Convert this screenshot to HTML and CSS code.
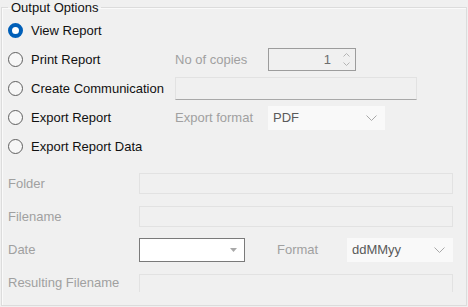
FILE: index.html
```html
<!DOCTYPE html>
<html lang="en">
  <head>
    <meta charset="utf-8">
    <title>Output Options</title>
    <link rel="stylesheet" href="styles.css">
  </head>
  <body>
    <fieldset class="options">
      <legend>Output Options</legend>

      <div class="choices">
        <div class="choice_row">
          <label class="radio checked"><span class="dot"></span>View Report</label>
        </div>
        <div class="choice_row">
          <label class="radio"><span class="dot"></span>Print Report</label>
          <span class="muted">No of copies</span>
          <div class="spin">
            <span class="spin_value">1</span>
            <span class="spin_arrows">
              <svg width="7" height="4" viewBox="0 0 7 4"><path d="M0.5 3.5 L3.5 0.5 L6.5 3.5" fill="none" stroke="#b4b4b4"/></svg>
              <svg width="7" height="4" viewBox="0 0 7 4"><path d="M0.5 0.5 L3.5 3.5 L6.5 0.5" fill="none" stroke="#b4b4b4"/></svg>
            </span>
          </div>
        </div>
        <div class="choice_row">
          <label class="radio"><span class="dot"></span>Create Communication</label>
          <div class="textbox wide"></div>
        </div>
        <div class="choice_row">
          <label class="radio"><span class="dot"></span>Export Report</label>
          <span class="muted">Export format</span>
          <div class="combo export_combo">
            <span>PDF</span>
            <svg width="11" height="6" viewBox="0 0 11 6"><path d="M0.5 0.5 L5.5 5.5 L10.5 0.5" fill="none" stroke="#a8a8a8"/></svg>
          </div>
        </div>
        <div class="choice_row">
          <label class="radio"><span class="dot"></span>Export Report Data</label>
        </div>
      </div>

      <div class="fields">
        <div class="field_row">
          <span class="muted">Folder</span>
          <div class="textbox"></div>
        </div>
        <div class="field_row">
          <span class="muted">Filename</span>
          <div class="textbox"></div>
        </div>
        <div class="field_row">
          <span class="muted">Date</span>
          <div class="date_line">
            <div class="date_combo">
              <svg width="7" height="4" viewBox="0 0 7 4"><path d="M0 0 L7 0 L3.5 4 Z" fill="#a8a8a8"/></svg>
            </div>
            <span class="muted format_label">Format</span>
            <div class="combo format_combo">
              <span>ddMMyy</span>
              <svg width="11" height="6" viewBox="0 0 11 6"><path d="M0.5 0.5 L5.5 5.5 L10.5 0.5" fill="none" stroke="#a8a8a8"/></svg>
            </div>
          </div>
        </div>
        <div class="field_row">
          <span class="muted">Resulting Filename</span>
          <div class="textbox cut"></div>
        </div>
      </div>
    </fieldset>
  </body>
</html>
```

FILE: styles.css
```css
html, body {
  margin:0;
  padding:0;
}
body {
  background-color:#f0f0f0;
  font-family:"Liberation Sans", Arial, sans-serif;
  font-size:13px;
  color:#111;
  width:468px;
  height:307px;
  overflow:hidden;
}

.options {
  box-sizing:border-box;
  height:306px;
  margin:0 1px;
  padding:1px 13px 0 6px;
  border:1px solid #dcdcdc;
  box-shadow:inset 1px 1px 0 #fafafa;
  min-width:0;
}
.options legend {
  padding:0 3px;
  line-height:15px;
  color:#111;
}

.choice_row {
  display:grid;
  grid-template-columns:167px 93px auto;
  align-items:center;
  height:29px;
}
.radio {
  display:flex;
  align-items:center;
  gap:8px;
  white-space:nowrap;
}
.dot {
  box-sizing:border-box;
  width:15px;
  height:15px;
  border:1px solid #5f5f5f;
  border-radius:50%;
  background-color:#f7f7f7;
}
.radio.checked .dot {
  border:4px solid #005fb8;
  background-color:#fff;
}

.muted {
  color:#a0a0a0;
  white-space:nowrap;
}

.spin {
  box-sizing:border-box;
  width:88px;
  height:23px;
  border:1px solid #9c9c9c;
  display:flex;
  align-items:center;
  justify-content:flex-end;
  padding-right:5px;
}
.spin_value {
  color:#6d6d6d;
  margin-right:12px;
}
.spin_arrows {
  display:flex;
  flex-direction:column;
  gap:5px;
}
.spin_arrows svg {
  display:block;
}

.textbox {
  box-sizing:border-box;
  height:21px;
  border:1px solid #e2e2e2;
  background-color:#f0f0f0;
}
.textbox.wide {
  grid-column:2 / 4;
  width:242px;
  height:23px;
  border-bottom-color:#a8a8a8;
}
.textbox.cut {
  height:18px;
  align-self:start;
  margin-top:8px;
  border-bottom:none;
}

.combo {
  box-sizing:border-box;
  height:24px;
  background-color:#f9f9f9;
  display:flex;
  align-items:center;
  justify-content:space-between;
  padding:0 8px 0 5px;
  color:#5a5a5a;
}
.export_combo {
  width:117px;
}
.format_combo {
  width:106px;
}

.fields {
  margin-top:6px;
}
.field_row {
  display:grid;
  grid-template-columns:131px 1fr;
  align-items:center;
  height:33px;
}
.date_line {
  display:flex;
  align-items:center;
}
.date_combo {
  box-sizing:border-box;
  width:106px;
  height:24px;
  border:1px solid #7a7a7a;
  background-color:#fff;
  display:flex;
  align-items:center;
  justify-content:flex-end;
  padding-right:7px;
}
.format_label {
  width:70px;
  margin-left:32px;
}
```
